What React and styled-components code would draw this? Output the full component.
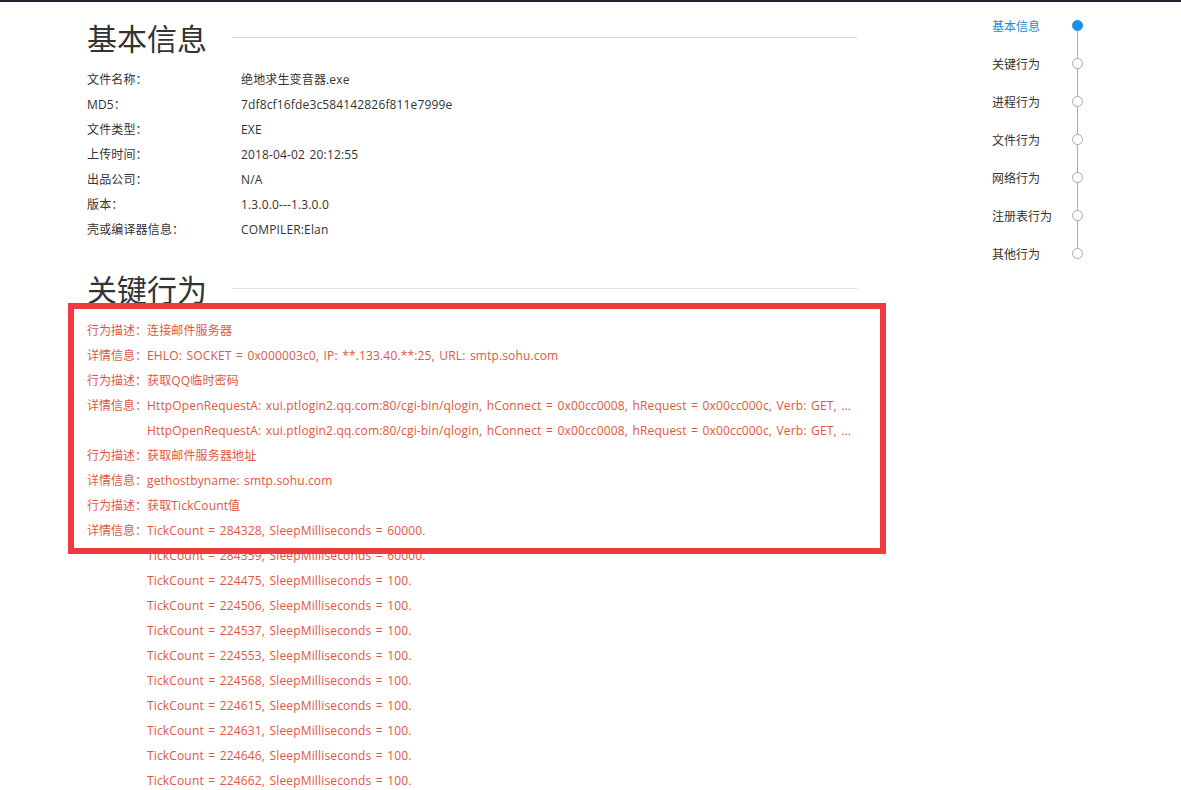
import React from 'react';
import styled, { createGlobalStyle } from 'styled-components';

const GlobalStyle = createGlobalStyle`
  html, body {
    margin: 0;
    padding: 0;
    background: #fff;
  }
  body {
    font-family: "Open Sans", "Noto Sans CJK SC", sans-serif;
    font-size: 12px;
    color: #333;
  }
`;

const baseInfo = [
  ['文件名称：', '绝地求生变音器.exe'],
  ['MD5：', '7df8cf16fde3c584142826f811e7999e'],
  ['文件类型：', 'EXE'],
  ['上传时间：', '2018-04-02 20:12:55'],
  ['出品公司：', 'N/A'],
  ['版本：', '1.3.0.0---1.3.0.0'],
  ['壳或编译器信息：', 'COMPILER:Elan'],
];

const http =
  'HttpOpenRequestA: xui.ptlogin2.qq.com:80/cgi-bin/qlogin, hConnect = 0x00cc0008, hRequest = 0x00cc000c, Verb: GET, ...';

const keyRows = [
  ['行为描述：', '连接邮件服务器'],
  ['详情信息：', 'EHLO: SOCKET = 0x000003c0, IP: **.133.40.**:25, URL: smtp.sohu.com'],
  ['行为描述：', '获取QQ临时密码'],
  ['详情信息：', http],
  ['', http],
  ['行为描述：', '获取邮件服务器地址'],
  ['详情信息：', 'gethostbyname: smtp.sohu.com'],
  ['行为描述：', '获取TickCount值'],
  ['详情信息：', 'TickCount = 284328, SleepMilliseconds = 60000.'],
  ['', 'TickCount = 284359, SleepMilliseconds = 60000.'],
  ...['224475', '224506', '224537', '224553', '224568', '224615', '224631', '224646', '224662'].map(
    (n) => ['', `TickCount = ${n}, SleepMilliseconds = 100.`]
  ),
];

const navItems = ['基本信息', '关键行为', '进程行为', '文件行为', '网络行为', '注册表行为', '其他行为'];

export default function App() {
  return (
    <>
      <GlobalStyle />
      <TopBar />
      <Page>
        <Main>
          <SectionHeader>
            <Title>基本信息</Title>
            <Rule />
          </SectionHeader>
          {baseInfo.map(([k, v]) => (
            <InfoRow key={k}>
              <InfoLabel>{k}</InfoLabel>
              <span>{v}</span>
            </InfoRow>
          ))}
          <SectionHeader $gap>
            <Title>关键行为</Title>
            <Rule />
          </SectionHeader>
          <KeyList>
            <Highlight />
            {keyRows.map(([k, v], i) => (
              <KeyRow key={i}>
                <KeyLabel>{k}</KeyLabel>
                <span>{v}</span>
              </KeyRow>
            ))}
          </KeyList>
        </Main>
        <Nav>
          <NavLine />
          {navItems.map((n, i) => (
            <NavItem key={n} $active={i === 0}>
              <NavText>{n}</NavText>
              <Dot $active={i === 0} />
            </NavItem>
          ))}
        </Nav>
      </Page>
    </>
  );
}

const TopBar = styled.div`
  height: 2px;
  background: #1b2631;
`;

const Page = styled.div`
  display: flex;
  align-items: flex-start;
`;

const Main = styled.div`
  margin-left: 87px;
  width: 770px;
`;

const SectionHeader = styled.div`
  display: flex;
  align-items: center;
  gap: 25px;
  height: 48px;
  margin-top: ${(p) => (p.$gap ? '22px' : '11px')};
  margin-bottom: 6px;
`;

const Title = styled.h2`
  margin: 0;
  font-family: "Noto Sans CJK SC", sans-serif;
  font-weight: 400;
  font-size: 30px;
  color: #333;
  white-space: nowrap;
`;

const Rule = styled.div`
  flex: 1;
  height: 1px;
  background: #dcdcdc;
`;

const InfoRow = styled.div`
  display: flex;
  height: 25px;
  line-height: 25px;
  color: #333;
  letter-spacing: 0.15px;
  word-spacing: 1.2px;
`;

const InfoLabel = styled.span`
  width: 154px;
  flex-shrink: 0;
`;

const KeyList = styled.div`
  position: relative;
`;

const Highlight = styled.div`
  position: absolute;
  left: -19px;
  top: -15px;
  width: 818px;
  height: 251px;
  box-sizing: border-box;
  border: 6px solid #ef3b3f;
  pointer-events: none;
`;

const KeyRow = styled.div`
  display: flex;
  height: 25px;
  line-height: 25px;
  color: #e0573f;
  white-space: nowrap;
  letter-spacing: 0.15px;
  word-spacing: 1.2px;
`;

const KeyLabel = styled.span`
  width: 60px;
  flex-shrink: 0;
  letter-spacing: 0;
`;

const Nav = styled.div`
  position: relative;
  margin-left: 135px;
  margin-top: 4px;
  width: 100px;
`;

const NavLine = styled.div`
  position: absolute;
  left: 85px;
  top: 19px;
  height: 227px;
  width: 1px;
  background: #aaa;
`;

const NavItem = styled.div`
  position: relative;
  display: flex;
  align-items: center;
  height: 38px;
  color: ${(p) => (p.$active ? '#1e8ad2' : '#333')};
`;

const NavText = styled.span`
  width: 80px;
  font-family: "Noto Sans CJK SC", sans-serif;
  font-size: 12px;
`;

const Dot = styled.span`
  width: 11px;
  height: 11px;
  box-sizing: border-box;
  border-radius: 50%;
  border: 1px solid ${(p) => (p.$active ? '#1a8fe6' : '#aaa')};
  background: ${(p) => (p.$active ? '#1a8fe6' : '#fff')};
  position: relative;
  z-index: 1;
`;
